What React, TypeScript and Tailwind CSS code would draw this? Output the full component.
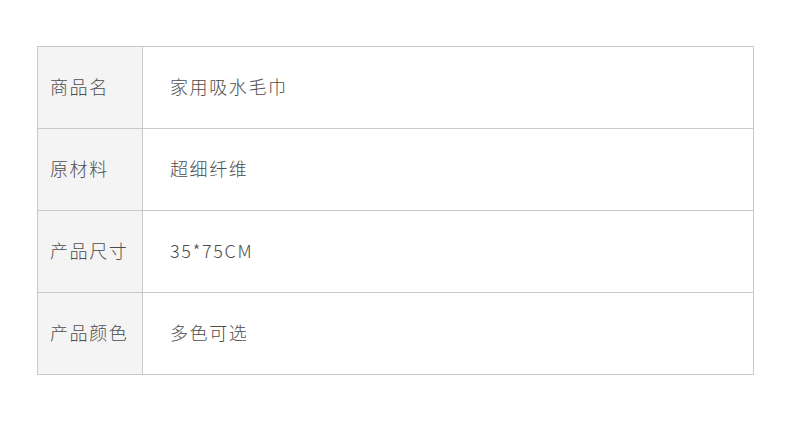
import React from "react";

const rows = [
  { label: "商品名", value: "家用吸水毛巾" },
  { label: "原材料", value: "超细纤维" },
  { label: "产品尺寸", value: "35*75CM" },
  { label: "产品颜色", value: "多色可选" },
];

export default function App() {
  return (
    <div
      className="w-[790px] h-[433px] bg-white pt-[46px] pl-[37px]"
      style={{ fontFamily: '"Noto Sans CJK SC", "Noto Sans", sans-serif' }}
    >
      <div className="w-[717px] border-t border-l border-r border-[#c9c9c9]">
        {rows.map((row) => (
          <div key={row.label} className="flex h-[82px] border-b border-[#c9c9c9]">
            <div className="w-[105px] shrink-0 flex items-center pl-[12px] pb-[3px] bg-[#f4f4f4] border-r border-[#c9c9c9] text-[18px] font-light tracking-[1.6px] text-[#4d4d4d]">
              {row.label}
            </div>
            <div className="flex-1 flex items-center pl-[27px] pb-[3px] text-[18px] font-light tracking-[1.6px] text-[#4d4d4d]">
              {row.value}
            </div>
          </div>
        ))}
      </div>
    </div>
  );
}
